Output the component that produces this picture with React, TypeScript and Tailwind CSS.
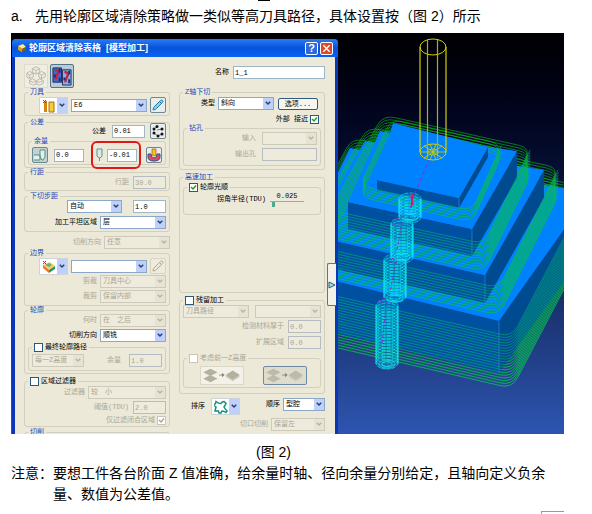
import type { ReactNode } from "react"
import clsx from "clsx"
import { Pencil } from "lucide-react"

type Point = [number, number]

// corners go back, right, front, left
const levels: { top: Point[]; height: number; loop: Point[]; passes: number }[] = [
  {
    top: [[350, 148], [590, 193], [499, 321], [290, 270]],
    height: 52,
    loop: [[352, 138], [590, 188], [512, 337], [275, 282]],
    passes: 20,
  },
  {
    top: [[365, 141], [544, 170], [485, 275], [310, 235]],
    height: 28,
    loop: [[368, 127], [559, 168], [499, 288], [300, 243]],
    passes: 11,
  },
  {
    top: [[380, 131], [517, 151], [472, 229], [348, 202]],
    height: 27,
    loop: [[383, 115], [531, 148], [484, 244], [330, 210]],
    passes: 11,
  },
  {
    top: [[393, 123], [488, 147], [459, 198], [377, 180]],
    height: 10,
    loop: [[391, 119], [502, 144], [472, 211], [360, 186]],
    passes: 5,
  },
]

const helixes = [
  { x: 387, from: 306, to: 364 },
  { x: 395, from: 260, to: 298 },
  { x: 402, from: 224, to: 257 },
  { x: 410, from: 199, to: 217 },
]

const toPoints = (points: Point[], dy = 0) => points.map(([x, y]) => `${x},${y + dy}`).join(" ")

function toward(a: Point, b: Point, distance: number): Point {
  const length = Math.hypot(b[0] - a[0], b[1] - a[1])
  return [a[0] + ((b[0] - a[0]) * distance) / length, a[1] + ((b[1] - a[1]) * distance) / length]
}

function roundedLoop(points: Point[], radius: number) {
  return (
    points
      .map((corner, i) => {
        const start = toward(corner, points[(i + 3) % 4], radius)
        const end = toward(corner, points[(i + 1) % 4], radius)
        return `${i === 0 ? "M" : "L"}${start} Q${corner} ${end}`
      })
      .join(" ") + " Z"
  )
}

// only the part that passes in front of the block
function frontLoop([, right, front, left]: Point[], radius: number) {
  return `M${toward(right, front, 2)} L${toward(front, right, radius)} Q${front} ${toward(front, left, radius)} L${toward(left, front, radius)} Q${left} ${toward(left, [left[0] + 20, left[1] - 50], radius)}`
}

function Level({ top, height, loop, passes }: (typeof levels)[number]) {
  const [, right, front, left] = top
  const depths = [...Array(passes)].map((_, i) => i * 2.7)
  return (
    <g>
      <g fill="none" stroke="#10c818" strokeWidth="0.7" opacity="0.8">
        {depths.map((dy) => (
          <path key={dy} d={roundedLoop(loop, 12)} transform={`translate(0 ${dy})`} />
        ))}
      </g>
      <polygon points={toPoints([left, front]) + " " + toPoints([front, left], height)} fill="#0050a2" />
      <polygon points={toPoints([front, right]) + " " + toPoints([right, front], height)} fill="#004a90" />
      <polygon points={toPoints(top)} fill="#0082ff" />
      <path d={`M${front} v${height}`} stroke="#3c8fd8" strokeWidth="0.6" />
      <g fill="none" stroke="#04b878" strokeWidth="0.8" opacity="0.7">
        {depths.map((dy) => (
          <path key={dy} d={frontLoop(loop, 12)} transform={`translate(0 ${dy})`} />
        ))}
      </g>
    </g>
  )
}

function Scene() {
  return (
    <svg viewBox="338 33 226 401" preserveAspectRatio="xMinYMin slice" className="h-full min-w-0 flex-1">
      {levels.map((level) => (
        <Level key={level.height} {...level} />
      ))}
      <g fill="none" stroke="#14f0f8" strokeWidth="0.7">
        {helixes.map(({ x, from, to }) => (
          <g key={x}>
            <rect x={x - 11} y={from - 5} width="22" height={to - from + 10} rx="8" fill="#00c8e8" fillOpacity="0.3" stroke="none" />
            {[...Array(Math.floor((to - from) / 3) + 1)].map((_, i) => (
              <ellipse key={i} cx={x} cy={from + i * 3} rx="11" ry="6" strokeDasharray="4 1" />
            ))}
            <ellipse cx={x} cy={to} rx="8" ry="4" />
            <ellipse cx={x} cy={to} rx="5" ry="2.5" />
            <path d={`M${x - 11} ${from} V${to} M${x + 11} ${from} V${to}`} />
            <path d={`M${x - 7} ${from} V${to} M${x + 7} ${from} V${to}`} stroke="#0474b8" strokeDasharray="2 2" />
          </g>
        ))}
      </g>
      <g stroke="#8c2cc8" strokeWidth="1" fill="none">
        <path d="M430 158 L412 200" strokeDasharray="4 3" />
        <path d="M396 219 l10 -3 M392 224 h12 M402 222 L397 250" strokeDasharray="3 2" />
        <path d="M387 257 l10 3 M389 262 h10 M396 262 L390 292" strokeDasharray="3 2" />
        <path d="M378 301 l9 -3 M380 303 h12 M386 305 L382 345" strokeDasharray="3 2" />
        <path d="M413 193 L411 208 M411 196 L413 205" stroke="#e0106c" strokeWidth="1.5" />
      </g>
      <g fill="none" stroke="#d0d000">
        <ellipse cx="433" cy="47" rx="13" ry="8" />
        <ellipse cx="433" cy="152" rx="13" ry="8" />
        <path d="M420 47 V152 M446 47 V152" strokeWidth="1.2" />
        <path d="M427.500 40 V158 M437.500 40 V158" stroke="#b4b000" strokeWidth="1.2" />
        <path d="M420 152 H446 M424 146 L442 158 M442 146 L424 158 M430 144 L436 160 M436 144 L430 160" strokeWidth="0.8" />
        <ellipse cx="433" cy="152" rx="5" ry="3" strokeWidth="0.8" />
      </g>
    </svg>
  )
}

function Arrow({ disabled }: { disabled?: boolean }) {
  return (
    <span
      className={clsx(
        "pointer-events-none absolute inset-y-0 right-0 flex w-[10px] items-center justify-center",
        disabled ? "bg-[#e6e3d4] text-[#b8b5a4]" : "bg-[#bfd0fa] text-[#29406f]"
      )}
    >
      <svg viewBox="0 0 8 6" className="w-[6px]" fill="none" stroke="currentColor" strokeWidth="2">
        <path d="M1 1 L4 4 L7 1" />
      </svg>
    </span>
  )
}

type FieldProps = { label?: string; name?: string; value?: string; width: string; disabled?: boolean; gap?: string }

function SelectField({ label, name, value = "", width, disabled, gap = "gap-[3px]" }: FieldProps) {
  return (
    <label className={clsx("flex items-center", gap, disabled && "text-[#aaa796]")}>
      {label}
      <span
        className={clsx(
          "relative flex h-[13px] overflow-hidden border",
          width,
          disabled ? "border-[#cdcaba] bg-[#eeebdc]" : "border-[#8ca8c8] bg-white"
        )}
      >
        <select aria-label={label ?? name} disabled={disabled} className="w-full appearance-none pl-[2px] leading-[11px] whitespace-pre">
          <option>{value}</option>
        </select>
        <Arrow disabled={disabled} />
      </span>
    </label>
  )
}

function TextField({ label, name, value = "", width, disabled, gap = "gap-[4px]" }: FieldProps) {
  return (
    <label className={clsx("flex items-center", gap, disabled && "text-[#aaa796]")}>
      {label}
      <input
        aria-label={label ?? name}
        defaultValue={value}
        disabled={disabled}
        className={clsx(
          "h-[13px] border pl-px leading-[11px]",
          width,
          disabled ? "border-[#b6bdc0] bg-[#eeebdc]" : "border-[#9fb5c8] bg-white"
        )}
      />
    </label>
  )
}

type TickProps = { label: string; checked?: boolean; disabled?: boolean; after?: boolean }

function Tick({ label, checked, disabled, after }: TickProps) {
  return (
    <label className={clsx("flex items-center gap-[2px]", disabled ? "text-[#aaa796]" : "text-black", after && "flex-row-reverse")}>
      <span className="relative flex">
        <input
          type="checkbox"
          defaultChecked={checked}
          disabled={disabled}
          className="peer size-[9px] appearance-none border border-[#28587c] bg-white disabled:border-[#c8c5b5]"
        />
        <svg
          viewBox="0 0 9 9"
          className="pointer-events-none absolute inset-0 hidden text-[#21a121] peer-checked:block peer-disabled:text-[#aaa796]"
          fill="none"
          stroke="currentColor"
          strokeWidth="1.500"
        >
          <path d="M2 4 L4 6 L7 2.500" />
        </svg>
      </span>
      {label}
    </label>
  )
}

function Group({ title, className, children }: { title: ReactNode; className?: string; children?: ReactNode }) {
  return (
    <fieldset className={clsx("min-w-0 rounded-[3px] border border-[#d2cfbe] px-[3px]", className)}>
      <legend className="h-[9px] px-[2px] leading-[9px] text-[#1c48b8]">{title}</legend>
      {children}
    </fieldset>
  )
}

function IconButton({ label, className, children }: { label: string; className?: string; children: ReactNode }) {
  return (
    <button
      aria-label={label}
      className={clsx("flex size-[16px] shrink-0 items-center justify-center rounded-[2px] border", className ?? "border-[#6d8794] bg-[#e8eeee]")}
    >
      {children}
    </button>
  )
}

function IconCombo({ label, children }: { label: string; children: ReactNode }) {
  return (
    <button aria-label={label} className="relative flex h-[17px] w-[29px] items-center border border-[#cdd3d8] bg-white pl-[2px]">
      {children}
      <Arrow />
    </button>
  )
}

function SheetsIcon({ disabled }: { disabled?: boolean }) {
  return (
    <svg viewBox="0 0 44 19" className="h-full w-full" fill={disabled ? "#bdbaa9" : "#b3b09f"}>
      <path d="M1 6 L9 2 L17 6 L9 10 Z M1 13 L9 9 L17 13 L9 17 Z M26 9 L34 4 L42 9 L34 14 Z" />
      <path d="M26 11 L34 16 L42 11 L34 6 Z" opacity="0.6" />
      <path d="M19 8.500 h3 v-2 l3 2.500 l-3 2.500 v-2 h-3 Z" fill="#8a8878" />
    </svg>
  )
}

function ToolIcons() {
  return (
    <div className="flex gap-[2px]">
      <button aria-label="模型" className="size-[24px] border border-[#dedbcb] bg-[#f0eee2]">
        <svg viewBox="0 0 24 24" fill="none" stroke="#b9b6a6" strokeWidth="1">
          <path d="M8 4 l4 -2 4 2 v4 l-4 2 -4 -2 Z M8 4 l4 2 4 -2 M12 6 v4" />
          <path d="M15 9 l3 -2 4 2 v4 l-4 2 -3 -2 Z M15 9 l3 2 4 -2 M18 11 v4" />
          <path d="M2 9 l3 -2 4 2 v4 l-4 2 -3 -2 Z M2 9 l3 2 4 -2 M5 11 v4" />
          <path d="M5 17 l3 -2 4 2 v4 l-3 1 -4 -2 Z M5 17 l4 2 3 -2 M13 17 l3 -2 4 2 v3 l-4 2 -3 -1 Z M13 17 l3 2 4 -2" />
        </svg>
      </button>
      <button aria-label="区域" className="size-[24px] rounded-[2px] border border-[#53738b] bg-[#b9cbd5] p-px">
        <svg viewBox="0 0 21 21">
          <path d="M1 2 h9 v15 h-9 Z" fill="#3c6cc8" stroke="#202c58" />
          <path d="M11 4 h9 v16 h-9 Z" fill="#7fb6e0" stroke="#202c58" />
          <path d="M3 4 q5 1 3 4 t-2 6 M13 6 q5 1 3 5 t-2 6" fill="none" stroke="#d02038" strokeWidth="2.500" />
          <path d="M8 3 v4 M3 9 v3 M8 12 v4 M18 5 v4 M13 12 v3 M18 14 v4" stroke="#1c2c90" strokeWidth="2" />
        </svg>
      </button>
    </div>
  )
}

function LeftColumn() {
  return (
    <div className="min-w-0 flex-1 pt-[7px]">
      <ToolIcons />
      <Group title="刀具" className="pb-px">
        <div className="flex justify-end gap-[3px]">
          <IconCombo label="刀具类型">
            <svg viewBox="0 0 14 14" className="w-[14px]">
              <path d="M2 2 h3 v11 h-3 Z" fill="#d88410" />
              <path d="M7 3 h5 v10 h-5 Z" fill="#f4cc38" stroke="#a87008" />
              <path d="M1 1 l3 3 M4 1 l-3 3" stroke="#e02018" />
            </svg>
          </IconCombo>
          <SelectField name="刀具" value="E6" width="w-[76px]" />
          <IconButton label="编辑刀具">
            <Pencil size={12} color="#1d7ba4" fill="#8fd0ec" strokeWidth={2} />
          </IconButton>
        </div>
      </Group>

      <Group title="公差" className="mt-[2px] pb-[2px]">
        <div className="-mt-[4px] flex items-center justify-end gap-[5px]">
          <TextField label="公差" value="0.01" width="w-[33px]" gap="gap-[6px]" />
          <IconButton label="点分布">
            <svg viewBox="0 0 14 14" className="w-[14px]" fill="#141414" stroke="#a02028" strokeWidth="0.700">
              <path d="M3 5 L6 2.500 M6 6 L11 5 M3 9 L7 12 L11 10" fill="none" />
              <circle cx="3" cy="5" r="1.500" stroke="none" />
              <circle cx="6" cy="2.500" r="1.500" stroke="none" />
              <circle cx="11" cy="5" r="1.500" stroke="none" />
              <circle cx="3" cy="9" r="1.500" stroke="none" />
              <circle cx="7" cy="12" r="1.500" stroke="none" />
              <circle cx="11" cy="10" r="1.500" stroke="none" />
            </svg>
          </IconButton>
        </div>
        <Group title="余量" className="-mt-[2px] pt-px pb-px">
          <div className="flex items-center">
            <IconButton label="余量" className="border-[#6d8794] bg-[#c4d2ce]">
              <svg viewBox="0 0 14 14" className="w-[14px]" fill="#e4f0ec" stroke="#4f8f88">
                <path d="M7 2 h5 v7 l-2 3 h-1 l-2 -3 Z M1 7 h6 v5 h-6" />
              </svg>
            </IconButton>
            <div className="ml-[6px]">
              <TextField name="径向余量" value="0.0" width="w-[30px]" />
            </div>
            <div className="relative ml-[11px] flex items-center gap-[3px]">
              <svg viewBox="0 0 9 14" className="w-[9px]" fill="#dcebe6" stroke="#4f9a90">
                <path d="M2 1 h5 v7 l-2 2 h-1 l-2 -2 Z M4.500 10 v3" />
              </svg>
              <TextField name="轴向余量" value="-0.01" width="w-[30px]" />
              <span className="pointer-events-none absolute -inset-x-[4px] -top-[7px] -bottom-[7px] rounded-[6px] border-2 border-[#e01818]" />
            </div>
            <IconButton label="部件余量" className="ml-[9px] border-[#6d8794] bg-[#e8eeee]">
              <svg viewBox="0 0 14 14" className="w-[14px]" fill="none">
                <path d="M1 6 v3 q0 4 6 4 t6 -4 v-3 h-3 q0 4 -3 4 t-3 -4 Z" fill="#e04860" stroke="#28508c" />
                <path d="M5 1 h4 v6 q-2 2 -4 0 Z" fill="#f8c020" stroke="#a06010" strokeWidth="0.700" />
              </svg>
            </IconButton>
          </div>
        </Group>
      </Group>

      <Group title="行距" className="pb-px">
        <div className="-mt-px flex justify-end">
          <TextField label="行距" value="30.0" width="w-[33px]" disabled />
        </div>
      </Group>

      <Group title="下切步距" className="mt-px pb-[2px]">
        <div className="-mt-px flex justify-end gap-[11px]">
          <SelectField name="下切步距" value="自动" width="w-[55px]" />
          <TextField name="步距" value="1.0" width="w-[33px]" />
        </div>
        <div className="mt-[3px] flex justify-end">
          <SelectField label="加工平坦区域" value="层" width="w-[66px]" />
        </div>
      </Group>

      <div className="mt-[4px] flex justify-end">
        <SelectField label="切削方向" value="任意" width="w-[66px]" disabled />
      </div>

      <Group title="边界" className="pb-[2px]">
        <div className="flex justify-end gap-[3px]">
          <IconCombo label="边界类型">
            <svg viewBox="0 0 14 14" className="w-[14px]">
              <path d="M1 5 l7 -3 5 4 -6 4 Z" fill="#f4d060" />
              <path d="M1 5 l6 5 v3 l-6 -5 Z" fill="#e87830" />
              <path d="M7 10 l6 -4 v3 l-6 4 Z" fill="#2c9468" />
              <path d="M3 5 l4 -2 3 2 -3 2 Z" fill="#58b880" />
              <path d="M1 1 l3 3 M4 1 l-3 3" stroke="#e02018" />
            </svg>
          </IconCombo>
          <SelectField name="边界" width="w-[76px]" />
          <IconButton label="编辑边界" className="border-[#d8d5c5] bg-[#eeebdc]">
            <Pencil size={12} color="#aaa796" strokeWidth={2} />
          </IconButton>
        </div>
        <div className="flex flex-col items-end gap-[2px]">
          <SelectField label="剪裁" value="刀具中心" width="w-[66px]" disabled />
          <SelectField label="裁剪" value="保留内部" width="w-[66px]" disabled />
        </div>
      </Group>

      <Group title="轮廓" className="pb-[2px]">
        <div className="-mt-px flex flex-col items-end gap-[2px]">
          <SelectField label="何时" value={"在\u3000之后"} width="w-[66px]" disabled />
          <SelectField label="切削方向" value="顺铣" width="w-[66px]" />
        </div>
        <Group title={<Tick label="最终轮廓路径" />} className="mt-px pt-[2px] pb-[3px]">
          <div className="flex justify-between">
            <SelectField name="高度" value="每一Z高度" width="w-[52px]" disabled />
            <TextField label="余量" value="1.0" width="w-[33px]" gap="gap-[8px]" disabled />
          </div>
        </Group>
      </Group>

      <Group title={<Tick label="区域过滤器" />} className="mt-[3px] pb-px">
        <div className="flex flex-col items-end gap-[2px]">
          <SelectField label="过滤器" value={"较\u3000小"} width="w-[78px]" disabled />
          <TextField label="阈值(TDU)" value="2.0" width="w-[33px]" disabled />
          <Tick label="仅过滤闭合区域" checked disabled after />
        </div>
      </Group>

      <Group title="切削" className="mt-px h-[20px]" />
    </div>
  )
}

function RightColumn() {
  return (
    <div className="min-w-0 flex-1 pt-[9px]">
      <div className="flex justify-end">
        <TextField label="名称" value="1_1" width="w-[92px]" />
      </div>

      <Group title="Z轴下切" className="mt-[9px] pb-[3px]">
        <div className="flex items-center justify-end gap-[4px] pr-[3px]">
          <SelectField label="类型" value="斜向" width="w-[56px]" />
          <button className="h-[12px] w-[40px] rounded-[2px] border border-[#315880] bg-[#f6f5ee] leading-[10px]">选项...</button>
        </div>
        <div className="mt-[5px] flex justify-end pr-[2px]">
          <Tick label="外部 接近" checked after />
        </div>
        <Group title="钻孔" className="pb-[4px]">
          <div className="-mt-px flex flex-col items-end gap-[3px]">
            <SelectField label="输入" width="w-[55px]" gap="gap-[6px]" disabled />
            <TextField label="输出孔" width="w-[55px]" gap="gap-[6px]" disabled />
          </div>
        </Group>
      </Group>

      <Group title="高速加工" className="mt-[3px] pb-[77px]">
        <Group title={<Tick label="轮廓光顺" checked />} className="mt-px pb-[7px]">
          <label className="flex items-center justify-end gap-[4px] pr-[13px]">
            拐角半径(TDU)
            <span className="flex w-[34px] flex-col items-center">
              <output className="leading-[9px]">0.025</output>
              <input
                type="range"
                defaultValue={8}
                className="h-[6px] w-full appearance-none border-t border-[#a8a698] [&::-webkit-slider-thumb]:h-[5px] [&::-webkit-slider-thumb]:w-[3px] [&::-webkit-slider-thumb]:appearance-none [&::-webkit-slider-thumb]:bg-[#4fa88c]"
              />
            </span>
          </label>
        </Group>
      </Group>

      <Group title={<Tick label="残留加工" />} className="mt-[3px] pb-[5px]">
        <div className="flex justify-between">
          <SelectField name="残留" value="刀具路径" width="w-[66px]" disabled />
          <SelectField name="参考" width="w-[66px]" disabled />
        </div>
        <div className="mt-[2px] flex flex-col items-end gap-[3px]">
          <TextField label="检测材料厚于" value="0.0" width="w-[33px]" disabled />
          <TextField label="扩展区域" value="0.0" width="w-[33px]" disabled />
        </div>
        <Group title={<Tick label="考虑前一Z高度" disabled />} className="mt-[5px] pt-[3px] pb-[2px]">
          <div className="flex justify-between pr-[10px] pl-[13px]">
            <button aria-label="前一高度" className="h-[19px] w-[44px] border border-[#dad7c8] bg-[#f4f2e8]">
              <SheetsIcon />
            </button>
            <button aria-label="合并高度" className="h-[19px] w-[44px] rounded-[2px] border border-[#6d8aa4] bg-[#dedccd]">
              <SheetsIcon disabled />
            </button>
          </div>
        </Group>
      </Group>

      <div className="mt-[4px] flex items-start justify-between pl-[12px]">
        <div className="flex items-center gap-[6px]">
          排序
          <IconCombo label="排序">
            <svg viewBox="0 0 14 14" className="w-[14px]" fill="none" stroke="#16907c" strokeWidth="1.500">
              <path d="M2 1.500 q2.500 2 5 2 q1 -2 3 -2 l2 2 q-1 2 -2 3.500 q1 2 3 4 l-1 1.500 q-2 -1.500 -4 -1.500 l-1 2 h-2 l-0.500 -2 h-3.500 l1 -4 l-2.500 -2 l2 -1.500 Z" />
            </svg>
          </IconCombo>
        </div>
        <SelectField label="顺序" value="型腔" width="w-[42px]" />
      </div>
      <div className="mt-[3px] flex justify-end">
        <SelectField label="切口切削" value="保留左" width="w-[54px]" disabled />
      </div>
    </div>
  )
}

function Dialog() {
  return (
    <div className="relative mt-[6px] ml-px w-[326px] shrink-0 rounded-t-[4px] bg-[#0a36b8] px-[3px] font-['Liberation_Mono','Noto_Sans_CJK_SC',monospace] text-[7px] leading-[9px] text-black">
      <div className="-mx-[3px] flex h-[18px] items-center gap-[2px] rounded-t-[4px] bg-linear-to-b from-[#2a7af4] via-[#0653dc] to-[#0a62f4] px-[5px]">
        <svg viewBox="0 0 10 10" className="w-[10px]">
          <path d="M1 3 l5 -2 3 3 -4 2 Z" fill="#f8e890" />
          <path d="M1 3 l4 3 v3 l-4 -2 Z" fill="#d8a010" />
          <path d="M5 6 l4 -2 v3 l-4 2 Z" fill="#806010" />
        </svg>
        <h1 className="flex-1 font-['Liberation_Sans','Noto_Sans_CJK_SC',sans-serif] text-[9px] font-bold whitespace-pre text-white">
          轮廓区域清除表格{"  "}[模型加工]
        </h1>
        <button className="size-[13px] rounded-[2px] border border-white bg-[#2f68d8] font-['Liberation_Sans',sans-serif] text-[11px] leading-[11px] font-bold text-white">
          ?
        </button>
        <button aria-label="关闭" className="flex size-[13px] items-center justify-center rounded-[2px] border border-white bg-[#dc4a28]">
          <svg viewBox="0 0 10 10" className="w-[9px]" stroke="#fff" strokeWidth="1.500">
            <path d="M1.500 1.500 L8.500 8.500 M8.500 1.500 L1.500 8.500" />
          </svg>
        </button>
      </div>
      <div className="flex gap-[9px] bg-[#ece9d8] pr-[10px] pl-[9px]">
        <LeftColumn />
        <RightColumn />
      </div>
      <button aria-label="展开" className="absolute top-[224px] right-[2px] flex h-[43px] w-[9px] items-center rounded-l-[2px] border border-r-0 border-[#54788c] bg-[#f2f1ea]">
        <svg viewBox="0 0 8 8" className="w-[8px]" fill="#a8dce0" stroke="#285c70">
          <path d="M1 1 L7 4 L1 7 Z" />
        </svg>
      </button>
    </div>
  )
}

export default function App() {
  return (
    <main className="overflow-hidden bg-white pr-[28px] pl-[11px] font-['Liberation_Sans','Noto_Sans_CJK_SC',sans-serif] text-[14px] leading-[21px] text-black">
      <hr className="ml-[247px] w-[12px] border-black" />
      <p className="mt-[5px] flex h-[27px]">
        <span className="w-[24px]">a.</span>
        先用轮廓区域清除策略做一类似等高刀具路径，具体设置按（图 2）所示
      </p>
      <figure>
        <div className="flex h-[401px] overflow-hidden bg-linear-to-b from-[#000004] via-[#0d1a45] via-45% to-[#2d55b0]">
          <Dialog />
          <Scene />
        </div>
        <figcaption className="mt-[8px] pl-[245px]">(图 2)</figcaption>
      </figure>
      <p className="pl-[42px] -indent-[42px]">注意：要想工件各台阶面 Z 值准确，给余量时轴、径向余量分别给定，且轴向定义负余量、数值为公差值。</p>
      <div className="mt-[6px] ml-auto h-[3px] w-[23px] border-t border-l border-[#999]" />
    </main>
  )
}
